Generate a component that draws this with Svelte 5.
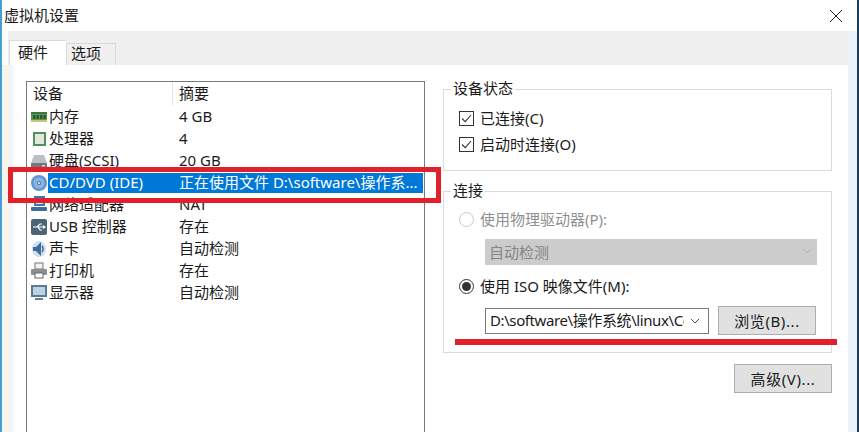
<script>
	const devices = [
		{ icon: 'ram', name: '内存', summary: '4 GB' },
		{ icon: 'cpu', name: '处理器', summary: '4' },
		{ icon: 'disk', name: '硬盘(SCSI)', summary: '20 GB' },
		{ icon: 'cd', name: 'CD/DVD (IDE)', summary: '正在使用文件 D:\\software\\操作系...', selected: true },
		{ icon: 'net', name: '网络适配器', summary: 'NAT' },
		{ icon: 'usb', name: 'USB 控制器', summary: '存在' },
		{ icon: 'sound', name: '声卡', summary: '自动检测' },
		{ icon: 'printer', name: '打印机', summary: '存在' },
		{ icon: 'display', name: '显示器', summary: '自动检测' }
	];
</script>

<div class="window">
	<header class="titlebar">
		<span class="title">虚拟机设置</span>
		<svg class="close" viewBox="0 0 14 14" fill="none" stroke="#222" stroke-width="1"><path d="M1 1l12 12M13 1L1 13" /></svg>
	</header>

	<div class="tabs">
		<div class="tab active">硬件</div>
		<div class="tab">选项</div>
	</div>

	<div class="page">
		<div class="list">
			<div class="list-head">
				<div class="col-name">设备</div>
				<div class="col-summary">摘要</div>
			</div>
			{#each devices as d}
				<div class="row" class:selected={d.selected}>
					<svg class="icon" viewBox="0 0 18 18">
						{#if d.icon === 'ram'}
							<rect x="1" y="4" width="16" height="10" fill="#5b9a52" />
							<rect x="1" y="4" width="16" height="2" fill="#3a7440" />
							<path d="M3 7h2.500v4H3zM6.500 7H9v4H6.500zM10 7h2.500v4H10zM13.500 7H16v4h-2.500z" fill="#2c5a32" />
							<rect x="1" y="12" width="16" height="2" fill="#c8c47a" />
						{:else if d.icon === 'cpu'}
							<rect x="3" y="2" width="13" height="14" fill="#4f9160" />
							<rect x="5" y="4" width="9" height="10" fill="#e3e8d8" />
						{:else if d.icon === 'disk'}
							<path d="M4 3h10l3 8H1z" fill="#bcc0c4" />
							<rect x="1" y="11" width="16" height="5" rx="1" fill="#74787c" />
							<rect x="12" y="13" width="3" height="1.500" fill="#d6d8da" />
						{:else if d.icon === 'cd'}
							<circle cx="9" cy="9" r="8" fill="#5f96d0" />
							<circle cx="9" cy="9" r="5.500" fill="#8ab6e2" />
							<circle cx="9" cy="9" r="2.200" fill="#4f86c0" />
							<circle cx="9" cy="9" r="1" fill="#e8f1fa" />
						{:else if d.icon === 'net'}
							<rect x="4" y="0" width="11" height="10" fill="#3d78b4" />
							<rect x="6" y="2" width="7" height="6" fill="#d5e6f4" />
							<rect x="1" y="11" width="16" height="4" rx="1" fill="#3d6f9e" />
						{:else if d.icon === 'usb'}
							<rect x="1" y="1" width="16" height="16" rx="2" fill="#4d6478" />
							<path d="M3 9h11M7 9l3-3h2M8 9l2 3h2" stroke="#fff" stroke-width="1.200" fill="none" />
							<path d="M13 7l3 2-3 2z" fill="#fff" />
						{:else if d.icon === 'sound'}
							<ellipse cx="9" cy="9" rx="7" ry="8" fill="#cfe0ee" />
							<path d="M3 7h3l5-5v14l-5-5H3z" fill="#3d6c98" />
							<path d="M12 6c1.500 2 1.500 4 0 6" stroke="#2f5c88" stroke-width="1.300" fill="none" />
						{:else if d.icon === 'printer'}
							<rect x="5" y="1" width="8" height="6" fill="#f2f2f2" stroke="#777" />
							<rect x="1" y="7" width="16" height="6" rx="1" fill="#8b8f94" />
							<rect x="5" y="11" width="8" height="5" fill="#fff" stroke="#666" />
						{:else if d.icon === 'display'}
							<rect x="1" y="1" width="16" height="12" fill="#5a7b98" />
							<rect x="3" y="3" width="12" height="8" fill="#bcd3e6" />
							<rect x="5" y="14" width="8" height="2" fill="#6d7c88" />
						{/if}
					</svg>
					<div class="name">{d.name}</div>
					<div class="summary">{d.summary}</div>
				</div>
			{/each}
		</div>

		<div class="side">
			<fieldset class="group status">
				<legend>设备状态</legend>
				<div class="opt">
					<svg class="check" viewBox="0 0 15 15"><rect x=".5" y=".5" width="14" height="14" fill="#fff" stroke="#333" /><path d="M3 7.500l3.200 3.200 5.800-6.700" fill="none" stroke="#333" stroke-width="1.100" /></svg>
					已连接(C)
				</div>
				<div class="opt">
					<svg class="check" viewBox="0 0 15 15"><rect x=".5" y=".5" width="14" height="14" fill="#fff" stroke="#333" /><path d="M3 7.500l3.200 3.200 5.800-6.700" fill="none" stroke="#333" stroke-width="1.100" /></svg>
					启动时连接(O)
				</div>
			</fieldset>

			<fieldset class="group conn">
				<legend>连接</legend>
				<div class="opt disabled">
					<span class="radio"></span>
					使用物理驱动器(P):
				</div>
				<div class="select-off">
					<span>自动检测</span>
					<svg class="chev" viewBox="0 0 10 6" fill="none" stroke="#b0b0b0"><path d="M1 1l4 4 4-4" /></svg>
				</div>
				<div class="opt iso">
					<span class="radio on"></span>
					使用 ISO 映像文件(M):
				</div>
				<div class="path-row">
					<div class="combo">
						<span class="combo-text">D:\software\操作系统\linux\CentOS</span>
						<svg class="chev" viewBox="0 0 10 6" fill="none" stroke="#555"><path d="M1 1l4 4 4-4" /></svg>
					</div>
					<div class="btn browse">浏览(B)...</div>
				</div>
			</fieldset>

			<div class="btn advanced">高级(V)...</div>
		</div>
	</div>

	<div class="mark-box"></div>
	<div class="mark-line"></div>
</div>

<style>
	:global(body) { margin: 0; background: #fff; }
	.window {
		position: relative;
		width: 859px;
		height: 432px;
		box-sizing: border-box;
		overflow: hidden;
		background: #edf1f8;
		border-left: 2px solid #4a9fd0;
		border-right: 2px solid #1d3d5c;
		font-family: "Noto Sans", "Noto Sans CJK SC", sans-serif;
		font-size: 15px;
		color: #1a1a1a;
	}
	.titlebar {
		height: 31px;
		display: flex;
		align-items: center;
		justify-content: space-between;
		padding: 0 14px 0 2px;
		background: #fff;
	}
	.title { margin-top: -3px; }
	.close { width: 14px; height: 14px; }
	.tabs {
		height: 34px;
		background: #f0f0f0;
		display: flex;
		align-items: flex-end;
		margin-right: 9px;
		padding-left: 7px;
		box-shadow: inset 6px 0 0 #fff;
	}
	.tab {
		width: 50px;
		height: 22px;
		line-height: 19px;
		box-sizing: border-box;
		padding-left: 4px;
		background: #f0f0f0;
		border: 1px solid #d9d9d9;
		border-bottom: 0;
	}
	.tab.active {
		width: 57px;
		height: 25px;
		line-height: 22px;
		padding-left: 8px;
		background: #fff;
		border-right: 0;
	}
	.page {
		display: flex;
		height: 367px;
		margin-right: 9px;
		padding: 16px 0 0 24px;
		box-sizing: border-box;
		background: linear-gradient(90deg, #eef6fb 0, #fbf3e6 5px, #eef6fb 10px, #fff 13px) no-repeat;
		background-color: #fff;
	}
	.list {
		width: 399px;
		height: 360px;
		box-sizing: border-box;
		border: 1px solid #7a7a7a;
		flex: none;
	}
	.list-head {
		display: flex;
		height: 24px;
		line-height: 23px;
	}
	.col-name { width: 146px; padding-left: 6px; box-sizing: border-box; border-right: 1px solid #e5e5e5; }
	.col-summary { padding-left: 6px; }
	.row {
		display: flex;
		align-items: center;
		height: 22px;
	}
	.icon { width: 18px; height: 18px; margin-left: 3px; flex: none; }
	.name { width: 124px; padding-left: 1px; flex: none; white-space: nowrap; height: 20px; line-height: 19px; }
	.summary { flex: 1; padding-left: 6px; margin-right: 1px; white-space: nowrap; overflow: hidden; height: 20px; line-height: 19px; }
	.row.selected .name,
	.row.selected .summary { background: #0078d7; color: #fff; }
	.side {
		width: 389px;
		margin-left: 18px;
		flex: none;
		margin-top: -2px;
	}
	.group {
		margin: 0;
		padding: 0;
		border: 1px solid #dcdcdc;
		box-sizing: border-box;
		min-width: 0;
	}
	.group legend { margin-left: -8px; padding: 0 2px 2px; line-height: 18px; }
	.status { height: 92px; padding: 6px 0 0 15px; }
	.conn { height: 172px; margin-top: 10px; padding: 5px 0 0 15px; }
	.opt {
		display: flex;
		align-items: center;
		gap: 6px;
		height: 26px;
		box-sizing: border-box;
		padding-bottom: 2px;
	}
	.opt.disabled { color: #8f8f8f; }
	.check { width: 15px; height: 15px; flex: none; margin-top: 2px; }
	.radio {
		width: 13px;
		height: 13px;
		border: 1px solid #c8c8c8;
		border-radius: 50%;
		flex: none;
		background: #fff;
		position: relative;
		margin-top: 2px;
	}
	.radio.on { border-color: #333; }
	.radio.on::after {
		content: '';
		position: absolute;
		inset: 2px;
		border-radius: 50%;
		background: #333;
	}
	.select-off {
		display: flex;
		align-items: center;
		justify-content: space-between;
		width: 332px;
		height: 26px;
		margin: 7px 0 0 26px;
		padding: 0 5px 2px 4px;
		box-sizing: border-box;
		background: #cccccc;
		color: #858585;
	}
	.chev { width: 10px; height: 6px; flex: none; }
	.iso { margin-top: 8px; }
	.path-row {
		display: flex;
		align-items: center;
		gap: 9px;
		margin: 7px 0 0 26px;
	}
	.combo {
		display: flex;
		align-items: center;
		width: 224px;
		height: 26px;
		padding: 0 5px 0 4px;
		box-sizing: border-box;
		border: 1px solid #7a7a7a;
		background: #fff;
	}
	.combo-text { width: 194px; overflow: hidden; white-space: nowrap; margin-right: 6px; letter-spacing: -0.4px; padding-bottom: 2px; }
	.btn {
		display: flex;
		align-items: center;
		justify-content: center;
		width: 98px;
		height: 29px;
		box-sizing: border-box;
		background: #e1e1e1;
		border: 1px solid #adadad;
		letter-spacing: 0.6px;
	}
	.advanced { margin: 11px 0 0 auto; }
	.mark-box {
		position: absolute;
		left: 6px;
		top: 167px;
		width: 433px;
		height: 36px;
		box-sizing: border-box;
		border: 5px solid #e2202c;
	}
	.mark-line {
		position: absolute;
		left: 453px;
		top: 339px;
		width: 382px;
		height: 6px;
		background: #e2202c;
	}
</style>
